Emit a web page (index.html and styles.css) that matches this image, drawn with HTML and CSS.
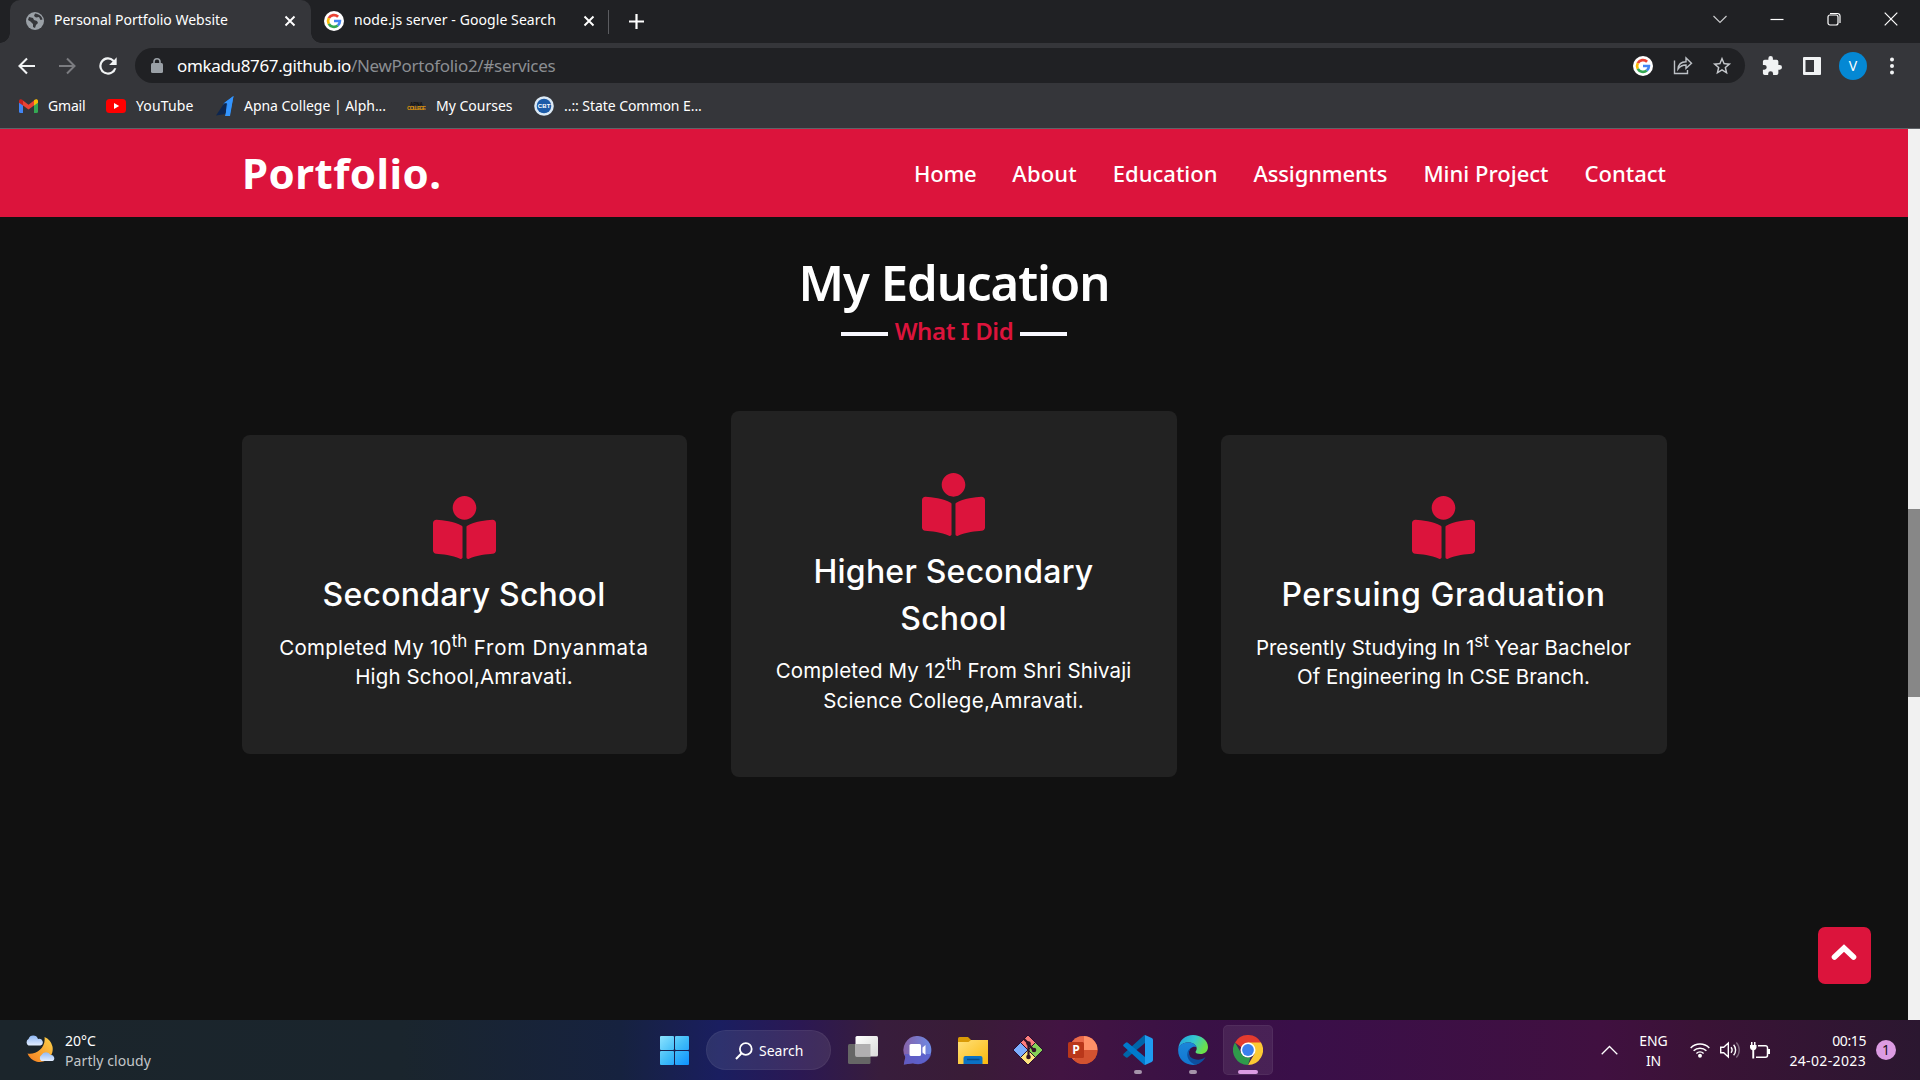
FILE: index.html
```html
<!DOCTYPE html>
<html lang="en">
<head>
<meta charset="utf-8">
<title>Personal Portfolio Website</title>
<link rel="stylesheet" href="styles.css">
</head>
<body>
<svg class="defs" aria-hidden="true">
  <symbol id="google" viewBox="0 0 20 20">
    <circle cx="10" cy="10" r="10" fill="#fff"/>
    <g fill="none" stroke-width="2.7">
      <path d="M14.1 5.7A5.9 5.9 0 0 0 4.8 7.2" stroke="#ea4335"/>
      <path d="M4.8 7.2A5.9 5.9 0 0 0 4.8 12.8" stroke="#fbbc05"/>
      <path d="M4.8 12.8A5.9 5.9 0 0 0 13.8 14.5" stroke="#34a853"/>
      <path d="M13.8 14.5A5.9 5.9 0 0 0 15.9 10H10" stroke="#4285f4"/>
    </g>
  </symbol>
  <symbol id="close" viewBox="0 0 12 12"><path d="M1.5 1.5l9 9M10.5 1.5l-9 9" stroke="#fff" stroke-width="1.9" fill="none"/></symbol>
  <symbol id="reader" viewBox="0 0 512 512"><path fill="crimson" d="M352 96c0-53.02-42.98-96-96-96s-96 42.98-96 96 42.98 96 96 96 96-42.98 96-96zM233.59 241.1c-59.33-36.32-155.43-46.3-203.79-49.05C13.55 191.13 0 203.51 0 219.14v222.8c0 14.33 11.59 26.28 26.49 27.05 43.66 2.29 131.99 10.68 193.04 41.43 9.37 4.72 20.48-1.71 20.48-11.87V252.56c-.01-4.67-2.32-8.95-6.42-11.46zm248.61-49.05c-48.35 2.74-144.46 12.73-203.78 49.05-4.1 2.51-6.41 6.96-6.41 11.63v245.79c0 10.19 11.14 16.63 20.54 11.9 61.04-30.72 149.32-39.11 192.97-41.4 14.9-.78 26.49-12.73 26.49-27.06V219.14c-.01-15.63-13.56-28.01-29.81-27.09z"/></symbol>
</svg>

<div class="tabs">
  <div class="tab tab-active">
    <svg width="18" height="18" viewBox="0 0 18 18"><circle cx="9" cy="9" r="9" fill="#9aa0a6"/><path d="M3 5l4 1 1 2 3 1 1 2-2 2-1 3-2-1v-3L4.500 9.500 2 8zM9 1.500l-1 2.500 2 1.500 3-.5 1.500 3 2-.5C16 4 13 2 9 1.500z" fill="#35363a"/></svg>
    <span class="tab-title">Personal Portfolio Website</span>
    <svg class="tab-close" width="12" height="12"><use href="#close"/></svg>
  </div>
  <div class="tab tab-second">
    <svg width="20" height="20"><use href="#google"/></svg>
    <span class="tab-title">node.js server - Google Search</span>
    <svg class="tab-close" width="12" height="12"><use href="#close"/></svg>
  </div>
  <svg class="tab-new" width="15" height="15" viewBox="0 0 15 15"><path d="M7.500 0v15M0 7.500h15" stroke="#fff" stroke-width="2.200"/></svg>
  <div class="window-buttons">
    <svg viewBox="0 0 14 14"><path d="M.5 4L7 10.500 13.500 4" stroke="#c8c9cb"/></svg>
    <svg viewBox="0 0 14 14"><path d="M.5 7.500h13" stroke="#fff"/></svg>
    <svg viewBox="0 0 14 14"><rect x="1" y="3" width="10" height="10" rx="2" stroke="#fff"/><path d="M3 1.500h7.500a2.500 2.500 0 0 1 2.500 2.500V11" stroke="#fff"/></svg>
    <svg viewBox="0 0 14 14"><path d="M.7 .7l12.600 12.600M13.300 .7L.7 13.300" stroke="#fff"/></svg>
  </div>
</div>

<div class="toolbar">
  <svg class="nav-icon" width="24" height="24" viewBox="0 0 24 24"><path d="M20 12H5M12 4.500L4.500 12l7.500 7.500" stroke="#f1f3f4" stroke-width="2.100" fill="none"/></svg>
  <svg class="nav-icon" width="24" height="24" viewBox="0 0 24 24"><path d="M4 12h15M12 4.500l7.500 7.500-7.500 7.500" stroke="#7b7c80" stroke-width="2" fill="none"/></svg>
  <svg class="nav-icon" width="26" height="26" viewBox="0 0 24 24"><path fill="#f1f3f4" d="M17.650 6.350A8 8 0 1 0 19.730 14h-2.080A6 6 0 1 1 12 6c1.660 0 3.140.69 4.220 1.780L13 11h7V4z"/></svg>
  <div class="omnibox">
    <svg width="12" height="15" viewBox="0 0 12 15"><rect y="5" width="12" height="10" rx="1.500" fill="#9aa0a6"/><path d="M3 6V3.800a3 3 0 0 1 6 0V6" stroke="#9aa0a6" stroke-width="1.600" fill="none"/></svg>
    <span class="url"><span class="url-host">omkadu8767.github.io</span><span class="url-path">/NewPortofolio2/#services</span></span>
    <svg class="omni-google" width="20" height="20"><use href="#google"/></svg>
    <svg class="omni-icon" width="20" height="20" viewBox="0 0 20 20"><path d="M1.500 4.500v13h13v-3.500M5 13c.3-4 3-7 8-7.200V2l5.500 5.200L13 12.300V9C9 9 6.800 10.500 5 13z" stroke="#bdc1c6" stroke-width="1.400" fill="none"/></svg>
    <svg class="omni-icon" width="22" height="22" viewBox="0 0 24 24"><path fill="#c5c8cc" d="M22 9.240l-7.190-.62L12 2 9.190 8.630 2 9.240l5.460 4.730L5.820 21 12 17.270 18.180 21l-1.630-7.030zM12 15.400l-3.760 2.270 1-4.280-3.320-2.880 4.380-.38L12 6.100l1.710 4.040 4.380.38-3.320 2.880 1 4.280z"/></svg>
  </div>
  <div class="toolbar-end">
    <svg width="20" height="20" viewBox="1 1 22 22"><path fill="#f1f3f4" d="M20.500 11H19V7a2 2 0 0 0-2-2h-4V3.500a2.500 2.500 0 0 0-5 0V5H4a2 2 0 0 0-2 2v3.800h1.500a2.700 2.700 0 0 1 0 5.400H2V20a2 2 0 0 0 2 2h3.800v-1.500a2.700 2.700 0 0 1 5.400 0V22H17a2 2 0 0 0 2-2v-4h1.500a2.500 2.500 0 0 0 0-5z"/></svg>
    <svg width="18" height="18" viewBox="0 0 18 18"><rect width="18" height="18" rx="1" fill="#f1f3f4"/><rect x="2.500" y="3" width="8.500" height="12" fill="#35363a"/></svg>
    <span class="avatar">V</span>
    <svg width="6" height="18" viewBox="0 0 6 18" fill="#f1f3f4"><circle cx="3" cy="2.500" r="2"/><circle cx="3" cy="9" r="2"/><circle cx="3" cy="15.500" r="2"/></svg>
  </div>
</div>

<div class="bookmarks">
  <span class="bm bm-gmail"><svg width="19" height="14" viewBox="0 0 19 14"><path d="M0 2v10.500Q0 14 1.500 14H4V5z" fill="#4285f4"/><path d="M19 2v10.500q0 1.500-1.500 1.500H15V5z" fill="#34a853"/><path d="M4 1.500v5L9.500 10.500 15 6.500v-5L9.500 5.700z" fill="#ea4335"/><path d="M0 2.200C0 0 2.200-.3 4 1.200v5.300L0 3.800z" fill="#c5221f"/><path d="M19 2.200C19 0 16.800-.3 15 1.200v5.300l4-2.700z" fill="#fbbc04"/></svg>Gmail</span>
  <span class="bm bm-youtube"><svg width="20" height="14" viewBox="0 0 20 14"><rect width="20" height="14" rx="3.500" fill="#f00"/><path d="M8 4l5.200 3L8 10z" fill="#fff"/></svg>YouTube</span>
  <span class="bm bm-apna"><svg width="18" height="20" viewBox="0 0 18 20"><path d="M17.500 0L8 7 6.500 11l7 9z" fill="#2f8df5"/><path d="M8 7.500L0 19.500l9.500-1.500L11 7z" fill="#0d2650"/><path d="M17.500 0L9 6.500 12 8 9 20h5z" fill="#3395ff"/></svg>Apna College | Alph...</span>
  <span class="bm bm-courses"><svg width="19" height="10" viewBox="0 0 19 10"><text x="9.500" y="4.500" text-anchor="middle" font-size="4.500" font-weight="700" font-family="Liberation Sans" fill="#0b0b0b">APNA</text><text x="0" y="9" textLength="19" font-size="5.500" font-weight="700" font-family="Liberation Sans" fill="#d9920c">COLLEGE</text></svg>My Courses</span>
  <span class="bm bm-state"><svg width="20" height="20" viewBox="0 0 20 20"><circle cx="10" cy="10" r="9.800" fill="#dbe9f5"/><circle cx="10" cy="10" r="7.300" fill="#1c5ba8"/><text x="10" y="12.200" text-anchor="middle" textLength="12.500" font-size="6" font-weight="700" font-family="Liberation Sans" fill="#fff">CBT</text></svg>..:: State Common E...</span>
</div>

<div class="viewport">
  <div class="page">
    <header class="navbar">
      <div class="logo">Portfolio.</div>
      <nav class="menu"><span class="m-home">Home</span><span class="m-about">About</span><span>Education</span><span class="m-assign">Assignments</span><span>Mini Project</span><span>Contact</span></nav>
    </header>
    <section class="education">
      <h1 class="heading">My Education</h1>
      <div class="subheading"><i class="rule"></i><span>What I Did</span><i class="rule"></i></div>
      <div class="cards">
        <article class="card card-first">
          <svg class="card-icon"><use href="#reader"/></svg>
          <h2 class="card-title">Secondary School</h2>
          <p class="card-text"><span class="ls-3">Completed My 10</span><sup>th</sup><span class="ls-8"> From Dnyanmata</span><br><span class="ls-2">High School,Amravati.</span></p>
        </article>
        <article class="card card-tall">
          <svg class="card-icon"><use href="#reader"/></svg>
          <h2 class="card-title">Higher Secondary<br>School</h2>
          <p class="card-text"><span class="ls-2">Completed My 12</span><sup>th</sup><span class="ls-1"> From Shri Shivaji</span><br><span class="ls-3">Science College,Amravati.</span></p>
        </article>
        <article class="card">
          <svg class="card-icon"><use href="#reader"/></svg>
          <h2 class="card-title card-title-wide">Persuing Graduation</h2>
          <p class="card-text"><span class="ls-0">Presently Studying In 1</span><sup>st</sup><span class="ls-1"> Year Bachelor</span><br><span class="ls-0">Of Engineering In CSE Branch.</span></p>
        </article>
      </div>
    </section>
    <div class="to-top"><svg width="26" height="17" viewBox="0 0 26 17"><path d="M3.500 13L13 4l9.500 9" stroke="#fff" stroke-width="5.600" stroke-linecap="round" stroke-linejoin="miter" fill="none"/></svg></div>
  </div>
  <div class="scrollbar"><div class="thumb"></div></div>
</div>

<div class="taskbar">
  <div class="weather">
    <svg width="31" height="30" viewBox="0 0 31 30"><defs><linearGradient id="moon" x1="0" y1="1" x2="1" y2="0"><stop offset="0" stop-color="#f57c1f"/><stop offset="1" stop-color="#fcd34a"/></linearGradient><linearGradient id="cloud" x1="0" y1="0" x2="0" y2="1"><stop offset="0" stop-color="#8fb8f5"/><stop offset="1" stop-color="#e3eeff"/></linearGradient></defs><path d="M19.500 3A13 13 0 1 1 2.500 19.500C11 21 21 14 19.500 3z" fill="url(#moon)"/><path d="M3.500 11.500a4 3.800 0 0 1 0-6.500 5 5 0 0 1 9.500 0 3.400 3.400 0 0 1 2.500 6.500z" fill="url(#cloud)"/><path d="M16.500 27a3.500 3.500 0 0 1 0-6 5 5 0 0 1 9 0 3.200 3.200 0 0 1 2 6z" fill="url(#cloud)"/></svg>
    <div class="two-lines"><span>20°C</span><span class="dim">Partly cloudy</span></div>
  </div>
  <div class="apps">
    <span class="app"><svg width="29" height="29" viewBox="0 0 29 29"><defs><linearGradient id="winfill" x1="0" y1="0" x2="29" y2="29" gradientUnits="userSpaceOnUse"><stop offset="0" stop-color="#8ce3ff"/><stop offset=".5" stop-color="#41bdf8"/><stop offset="1" stop-color="#0d91ff"/></linearGradient></defs><g fill="url(#winfill)"><rect width="14" height="14" rx="1"/><rect x="15" width="14" height="14" rx="1"/><rect y="15" width="14" height="14" rx="1"/><rect x="15" y="15" width="14" height="14" rx="1"/></g></svg></span>
    <span class="search"><svg width="18" height="18" viewBox="0 0 18 18"><circle cx="10.800" cy="7" r="5.900" stroke="#fff" stroke-width="1.800" fill="none"/><path d="M6.600 11.200L1 17" stroke="#fff" stroke-width="2"/></svg>Search</span>
    <span class="app"><svg width="30" height="28" viewBox="0 0 30 28"><defs><linearGradient id="tv" x1="0" y1="0" x2="1" y2="1"><stop offset="0" stop-color="#fff"/><stop offset="1" stop-color="#d9d9d9"/></linearGradient></defs><rect y="8" width="22.500" height="20" rx="1.500" fill="#666"/><rect x="7.500" width="22.500" height="20.500" rx="1.500" fill="url(#tv)"/><rect x="7.500" y="8" width="15" height="12.500" fill="#b1afb1"/></svg></span>
    <span class="app"><svg width="29" height="29" viewBox="0 0 29 29"><defs><linearGradient id="chat" x1="0" y1="0" x2="1" y2="0"><stop offset="0" stop-color="#8661a8"/><stop offset="1" stop-color="#6c8be6"/></linearGradient></defs><path d="M15 0a14 14 0 1 1-5 27.300L.8 28.500l1.600-7.400A14 14 0 0 1 15 0z" fill="url(#chat)"/><path d="M1.500 18h26.800A14 14 0 0 1 10 27.300L.8 28.500l1.600-7.400z" fill="#5558c8" opacity=".75"/><rect x="6.500" y="8" width="11.500" height="12" rx="1.500" fill="#fff"/><path d="M19.500 11.500l3-2.500v10l-3-2.500z" fill="#fff"/></svg></span>
    <span class="app"><svg width="30" height="27" viewBox="0 0 30 27"><defs><linearGradient id="fold" x1="0" y1="0" x2="1" y2="1"><stop offset="0" stop-color="#ffe07a"/><stop offset="1" stop-color="#fbb90c"/></linearGradient></defs><path d="M0 8V1.500Q0 0 1.500 0H10l3 3v5z" fill="#d99a06"/><path d="M0 5h10.500l2.500-2H30v24H0z" fill="url(#fold)"/><path d="M5.500 27v-6q0-2 2-2h15q2 0 2 2v6z" fill="#0b72c4"/><path d="M9 22.500h12.500" stroke="#064b88" stroke-width="1.500"/></svg></span>
    <span class="app"><svg width="30" height="30" viewBox="0 0 30 30"><g stroke="#2a1030" stroke-width="1"><path d="M15 0l7.500 7.500L15 15 7.500 7.500z" fill="#fc7d7e"/><path d="M22.500 7.500L30 15l-7.500 7.500L15 15z" fill="#85d157"/><path d="M15 15l7.500 7.500L15 30l-7.500-7.500z" fill="#fde27d"/><path d="M7.500 7.500L15 15l-7.500 7.500L0 15z" fill="#7cadff"/></g><path d="M10.500 3.500l5 5V23M15.500 9l5 6" stroke="#331429" stroke-width="2.200" fill="none"/><g fill="#331429"><circle cx="15.500" cy="8.500" r="2.300"/><circle cx="21" cy="15" r="2.300"/><circle cx="15.500" cy="22" r="2.300"/></g></svg></span>
    <span class="app"><svg width="30" height="28" viewBox="0 0 30 28"><circle cx="15.500" cy="14" r="14" fill="#c9482c"/><path d="M15.500 0a14 14 0 0 1 14 14h-14z" fill="#ff9068"/><path d="M15.500 0v14L5.600 23.900A14 14 0 0 1 15.500 0z" fill="#e9694a"/><path d="M29.500 14a14 14 0 0 1-23.900 9.900L15.500 14z" fill="#d35230"/><rect y="6" width="16" height="16" rx="1.500" fill="#b9371a"/><text x="8" y="18.200" text-anchor="middle" font-family="Open Sans" font-weight="700" font-size="12" fill="#fff">P</text></svg></span>
    <span class="app app-open"><svg width="30" height="30" viewBox="0 0 30 30"><path d="M22 8L4.500 22.500Q3.500 23 2.700 22.300L.6 20.500Q-.2 19.600.6 18.800L20.500.7Q21.200 0 22 .1z" fill="#0065a9"/><path d="M22 22L4.500 7.500Q3.500 7 2.700 7.700L.6 9.500Q-.2 10.400.6 11.200L20.500 29.300Q21.200 30 22 29.900z" fill="#007acc"/><path d="M22 0l6.700 3.100Q30 3.800 30 5v20q0 1.200-1.300 1.900L22 30z" fill="#1f9cf0"/></svg></span>
    <span class="app app-open"><svg width="30" height="30" viewBox="0 0 30 30"><defs><linearGradient id="edge1" x1="0" y1="0" x2="1" y2=".4"><stop offset="0" stop-color="#1e9de0"/><stop offset=".55" stop-color="#35c8cf"/><stop offset="1" stop-color="#6be04a"/></linearGradient><linearGradient id="edge2" x1="0" y1="0" x2="0" y2="1"><stop offset="0" stop-color="#1b86d9"/><stop offset="1" stop-color="#1277d0"/></linearGradient></defs><path d="M.3 13C1.500 5 7.500 0 15 0c8 0 15 5 15 12 0 4.500-3.500 7-7.500 7-3 0-5-1-5-2 0-.8 1.200-1.300 1.200-3.500 0-3.300-3.500-6-8-6C6 7.500 2 9.500.3 13z" fill="url(#edge1)"/><path d="M.3 13C2 9 6 7.500 10.700 7.500c4 0 7 2 7.800 4.500-4-1-7.500 1-7.500 6 0 6 5 10 10 10-2 1.300-4 2-6 2C6 30-1 23 .3 13z" fill="url(#edge2)"/><path d="M12.500 13.500C9 18 11 22.500 16 24c4 1.200 8 .8 11.500-2-2.500 5-7 7.300-10 7.800C11 27.500 8.500 22 9.500 17.500c.5-2 1.500-3.500 3-4z" fill="#0d4f9f"/></svg></span>
    <span class="app app-current"><svg width="30" height="30" viewBox="0 0 30 30"><path d="M2 7.500a15 15 0 0 1 26 0L22 12H8z" fill="#e33b2e"/><path d="M28 7.500H15l6.500 11.200L15 30A15 15 0 0 0 28 7.500z" fill="#fcc934"/><path d="M2 7.500l6.500 11.200a7.500 7.500 0 0 0 9 3.400L15 30A15 15 0 0 1 2 7.500z" fill="#2f9a4b"/><circle cx="15" cy="15" r="7.500" fill="#fff"/><circle cx="15" cy="15" r="5.900" fill="#3b80ee"/></svg></span>
  </div>
  <div class="tray">
    <svg width="17" height="10" viewBox="0 0 17 10"><path d="M.7 9.300L8.500 1.500l7.800 7.800" stroke="#fff" stroke-width="1.300" fill="none"/></svg>
    <div class="two-lines lang"><span>ENG</span><span>IN</span></div>
    <svg class="tray-wifi" width="20" height="16" viewBox="0 0 20 16" fill="none" stroke="#fff" stroke-width="1.500"><path d="M.7 6a13 13 0 0 1 18.600 0M3.600 8.800a9 9 0 0 1 12.800 0M6.400 11.500a5.200 5.200 0 0 1 7.200 0"/><circle cx="10" cy="13.800" r="1.200" fill="#fff"/></svg>
    <svg class="tray-icon" width="20" height="18" viewBox="0 0 20 18" fill="none" stroke="#fff" stroke-width="1.400"><path d="M.7 6.200h3L8.300 2v14L3.700 11.800h-3zM11 6.200a4.500 4.500 0 0 1 0 5.600M13.600 3.700a8 8 0 0 1 0 10.600"/><path d="M16.300 1.500a11 11 0 0 1 0 15" opacity=".35"/></svg>
    <svg class="tray-icon" width="20" height="17" viewBox="0 0 20 17"><path d="M8 3.700h7.500a2 2 0 0 1 2 2v7.600a2 2 0 0 1-2 2H6" stroke="#fff" stroke-width="1.500" fill="none"/><path d="M17.500 7H20v5h-2.500zM0 3h1V0h1.500v3h1.500V0h1.500v3h1v2.500a3 3 0 0 1-2.300 2.800V16.500H2.300V8.300A3 3 0 0 1 0 5.500z" fill="#fff"/></svg>
    <div class="two-lines clock"><span class="time">00:15</span><span class="date">24-02-2023</span></div>
    <span class="badge">1</span>
  </div>
</div>
</body>
</html>
```
FILE: styles.css
```css
* { box-sizing: border-box; }
body {
  margin: 0; width: 1920px; height: 1080px; overflow: hidden;
  display: flex; flex-direction: column;
  background: #111; color: #fff;
  font: 14px/20px "Noto Sans", "Open Sans", sans-serif;
  white-space: nowrap;
}
svg { display: block; flex: none; }
.defs { position: absolute; width: 0; height: 0; }

/* browser tabs */
.tabs { height: 43px; flex: none; display: flex; align-items: center; background: #202124; }
.tab { height: 43px; display: flex; align-items: center; position: relative; padding-bottom: 1px; }
.tab-active {
  width: 301px; margin-left: 10px; padding-left: 16px; padding-right: 15px;
  background: #35363a; border-radius: 10px 10px 0 0;
}
.tab-active::before, .tab-active::after {
  content: ""; position: absolute; bottom: 0; width: 10px; height: 10px;
}
.tab-active::before { left: -10px; background: radial-gradient(circle at 0 0, #202124 9.500px, #35363a 10px); }
.tab-active::after { right: -10px; background: radial-gradient(circle at 100% 0, #202124 9.500px, #35363a 10px); }
.tab-title { margin-left: 10px; padding-bottom: 2px; }
.tab-close { margin-left: auto; }
.tab-second { width: 298px; padding-left: 13px; padding-right: 14px; }
.tab-second .tab-title { letter-spacing: .08px; }
.tab-second::after { content: ""; position: absolute; right: 0; top: 10px; width: 1px; height: 24px; background: #5b5c60; }
.tab-new { margin-left: 20px; }
.window-buttons { margin-left: auto; display: flex; gap: 43px; padding: 0 22px 6px 0; }
.window-buttons svg { width: 14px; height: 14px; fill: none; stroke-width: 1.200; }

/* toolbar */
.toolbar { height: 45px; flex: none; display: flex; align-items: center; padding-left: 15px; background: #35363a; }
.nav-icon { margin-right: 16px; }
.nav-icon:nth-child(3) { margin-right: 14px; }
.omnibox {
  width: 1610px; height: 35px; border-radius: 18px; background: #202124;
  display: flex; align-items: center; padding: 0 12px 0 16px;
}
.url { margin-left: 14px; font-size: 17px; color: #8b8e92; }
.url-host { color: #fff; letter-spacing: -.35px; }
.url-path { letter-spacing: -.29px; }
.omni-google { margin-left: auto; }
.omni-icon { margin-left: 20px; }
.omni-icon:last-child { margin-left: 18px; }
.toolbar-end { display: flex; align-items: center; padding-left: 17px; }
.toolbar-end svg:nth-child(2) { margin-left: 21px; }
.avatar {
  width: 28px; height: 28px; margin: 0 22px 0 18px; border-radius: 50%;
  background: #0488d4; text-align: center; line-height: 28px;
}

/* bookmarks */
.bookmarks {
  height: 41px; flex: none; display: flex; padding: 0 0 4px 19px;
  background: #35363a; border-bottom: 1px solid #5f6368;
}
.bm { display: flex; align-items: center; gap: 10px; }
.bm-gmail { width: 87px; letter-spacing: -.2px; }
.bm-youtube { width: 110px; letter-spacing: .15px; }
.bm-apna { width: 191px; letter-spacing: -.03px; }
.bm-courses { width: 127px; }
.bm-state { letter-spacing: -.06px; }

/* viewport */
.viewport { height: 891px; flex: none; display: flex; }
.page { width: 1908px; position: relative; background: #111; }
.scrollbar { width: 12px; padding-top: 380px; background: #f1f1f1; }
.thumb { height: 188px; background: #878787; }

.navbar {
  height: 88px; padding: 0 242px 1px 242px; background: crimson;
  display: flex; align-items: center; justify-content: space-between;
}
.logo { font-size: 42px; font-weight: 700; line-height: 60px; letter-spacing: .45px; }
.menu { display: flex; gap: 36px; font-size: 22px; font-weight: 500; line-height: 30px; }
.m-home { letter-spacing: -.25px; }
.m-about { letter-spacing: .15px; }
.m-assign { letter-spacing: -.15px; }

.education { padding-top: 35px; display: flex; flex-direction: column; align-items: center; }
.heading { margin: 0; font-size: 49px; font-weight: 600; line-height: 60px; letter-spacing: -1px; }
.subheading {
  margin-top: 3px; display: flex; align-items: center; gap: 7px;
  color: crimson; font-size: 24px; font-weight: 600; line-height: 30px; letter-spacing: -.4px;
}
.subheading span { padding-top: 1px; margin-bottom: -1px; }
.rule { width: 47px; height: 4px; margin-top: 7px; background: #f8f8ff; }

.cards { margin-top: 66px; display: flex; align-items: center; gap: 44px; }
.card {
  width: 446px; height: 319px; padding-top: 61px; border-radius: 8px; background: #222;
  display: flex; flex-direction: column; align-items: center; text-align: center;
  font-family: Inter, "Noto Sans", sans-serif;
}
.card-first { width: 445px; }
.card-tall { height: 366px; padding-top: 62px; }
.card-icon { width: 63px; height: 63px; }
.card-title { margin: 12px 0 15px; font-size: 32px; font-weight: 500; line-height: 47px; letter-spacing: .22px; }
.card-tall .card-title { margin-bottom: 14px; }
.card-title-wide { letter-spacing: .6px; }
.card-text { margin: 0; font-size: 20.500px; line-height: 29.500px; }
.card-text sup { font-size: 17px; line-height: 0; }
.ls-0 { letter-spacing: -.06px; }
.ls-1 { letter-spacing: .1px; }
.ls-2 { letter-spacing: .14px; }
.ls-3 { letter-spacing: .25px; }
.ls-8 { letter-spacing: .75px; }

.to-top {
  position: absolute; right: 37px; bottom: 36px; width: 53px; height: 57px;
  padding: 17px 0 0 13px; border-radius: 7px; background: crimson;
}

/* taskbar */
.taskbar {
  height: 60px; flex: none; display: flex; align-items: center;
  background: linear-gradient(90deg, #1b252b 0, #1a252d 400px, #16223f 620px, #1a1e60 720px, #2b1853 800px, #381d3c 880px, #391c37 970px, #421442 1060px, #391145 1200px, #3a0f49 1300px, #401040 1600px, #3a1336 1700px, #2b1730 1920px);
}
.two-lines { display: flex; flex-direction: column; padding-top: 1px; }
.weather { width: 647px; display: flex; align-items: center; gap: 9px; padding-left: 25px; }
.weather svg { margin-top: -3px; }
.dim { color: #c3c6c9; letter-spacing: .1px; }
.apps { display: flex; align-items: center; }
.app { width: 55px; height: 50px; display: flex; align-items: center; justify-content: center; position: relative; }
.search {
  width: 125px; height: 40px; margin: 0 4px; padding: 1px 0 0 28px; border-radius: 20px;
  background: rgba(255,255,255,.09); border: 1px solid rgba(255,255,255,.05);
  display: flex; align-items: center; gap: 6px;
}
.app-open::after, .app-current::after {
  content: ""; position: absolute; bottom: 1px; width: 8px; height: 4px; border-radius: 2px; background: #a593aa;
}
.app-current { width: 50px; margin-left: 3px; border-radius: 5px; background: rgba(255,255,255,.08); border: 1px solid rgba(255,255,255,.05); }
.app-current::after { bottom: 0; width: 20px; background: #dc9be3; }
.tray { margin-left: auto; display: flex; align-items: center; padding-right: 24px; }
.lang { width: 43px; margin-left: 14px; align-items: center; letter-spacing: -.1px; }
.tray-wifi { margin-left: 15px; }
.tray-icon { margin-left: 10px; }
.clock { width: 96px; align-items: flex-end; }
.time { letter-spacing: -.4px; }
.date { letter-spacing: .35px; }
.badge {
  width: 20px; height: 20px; margin-left: 10px; border-radius: 50%;
  background: #dc9be3; color: #1c1020; text-align: center; font-size: 14px;
}
```
